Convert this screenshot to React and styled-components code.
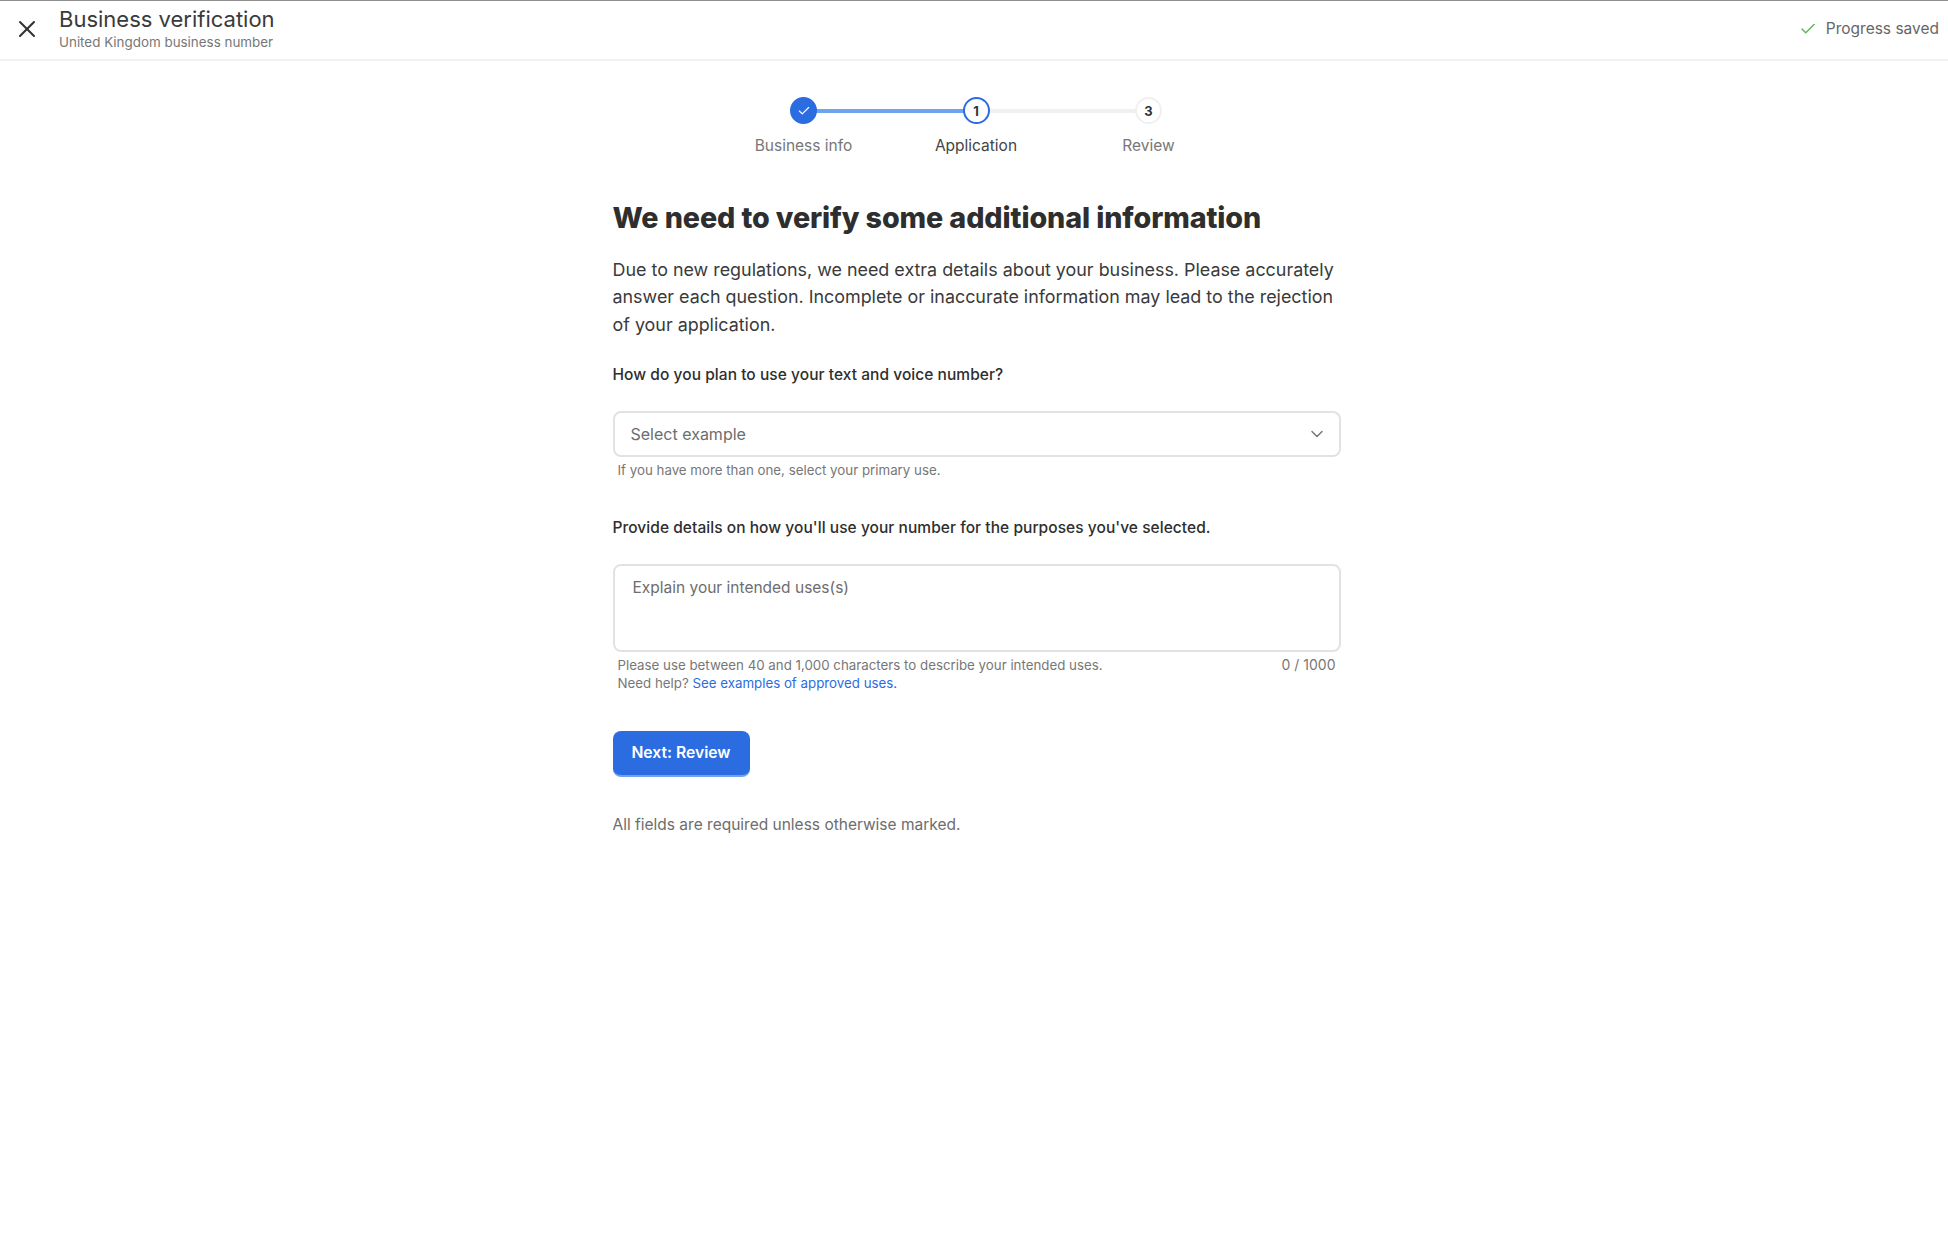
import React from "react";
import styled, { createGlobalStyle } from "styled-components";
import { X, Check, ChevronDown } from "lucide-react";

const GlobalStyle = createGlobalStyle`
  html, body {
    margin: 0;
    padding: 0;
    background: #fff;
    font-family: "Inter", "Liberation Sans", sans-serif;
    color: #2b2b2b;
  }
  * { box-sizing: border-box; }
`;

const Page = styled.div`
  min-height: 1256px;
  display: flex;
  flex-direction: column;
`;

const Header = styled.header`
  height: 61px;
  display: flex;
  align-items: center;
  justify-content: space-between;
  border-top: 1px solid #8e8e8e;
  border-bottom: 2px solid #f2f2f2;
  padding: 0 9px 0 11px;
`;

const HeaderLeft = styled.div`
  display: flex;
  align-items: center;
  gap: 16px;
`;

const CloseBtn = styled.button`
  width: 32px;
  height: 32px;
  padding: 0;
  border: 0;
  background: none;
  color: #333;
  display: flex;
  align-items: center;
  justify-content: center;
  margin-top: -3px;
`;

const TitleBox = styled.div`
  display: flex;
  flex-direction: column;
  gap: 1px;
  margin-top: -4px;
`;

const Title = styled.div`
  font-size: 22px;
  line-height: 27px;
  color: #3a3a3a;
`;

const SubTitle = styled.div`
  font-size: 13.4px;
  line-height: 16px;
  color: #777;
`;

const Saved = styled.div`
  display: flex;
  align-items: center;
  gap: 9px;
  font-size: 15.5px;
  color: #666;
  margin-top: -3px;
  svg { color: #5cb85c; }
`;

const Stepper = styled.div`
  display: flex;
  justify-content: center;
  padding-top: 36px;
  margin-left: 4px;
`;

const Step = styled.div`
  width: 172.5px;
  display: flex;
  flex-direction: column;
  align-items: center;
  position: relative;
`;

const Connector = styled.div`
  position: absolute;
  top: 12px;
  left: 50%;
  width: 100%;
  height: 4px;
  background: ${({ $done }) => ($done ? "#6fa3ee" : "#f0f0f0")};
`;

const Dot = styled.div`
  position: relative;
  z-index: 1;
  width: 27px;
  height: 27px;
  border-radius: 50%;
  display: flex;
  align-items: center;
  justify-content: center;
  font-size: 13px;
  font-weight: 700;
  color: #333;
  background: ${({ $state }) => ($state === "done" ? "#2b6de1" : "#fff")};
  border: 2px solid
    ${({ $state }) => ($state === "todo" ? "#f0f0f0" : "#2b6de1")};
`;

const StepLabel = styled.div`
  margin-top: 13px;
  font-size: 15.5px;
  line-height: 18px;
  color: ${({ $active }) => ($active ? "#444" : "#777")};
`;

const Main = styled.main`
  width: 728px;
  margin: 0 0 0 612.5px;
  padding-top: 44px;
`;

const Heading = styled.h1`
  margin: 0;
  font-size: 28.7px;
  line-height: 38px;
  font-weight: 800;
  color: #2e2e2e;
  letter-spacing: -0.1px;
`;

const Intro = styled.p`
  margin: 19px 0 0;
  font-size: 17.9px;
  line-height: 27.3px;
  color: #3a3a3a;
`;

const Question = styled.div`
  font-size: 15.5px;
  line-height: 20px;
  font-weight: 500;
  letter-spacing: 0.05px;
  color: #2e2e2e;
  margin-top: ${({ $top }) => $top}px;
`;

const SelectBox = styled.div`
  margin-top: 26px;
  height: 46px;
  border: 2px solid #e2e2e2;
  border-radius: 8px;
  display: flex;
  align-items: center;
  justify-content: space-between;
  padding: 0 12px 0 16px;
  font-size: 16px;
  color: #6d6d6d;
  svg { color: #777; }
`;

const Hint = styled.div`
  padding: 0 5px;
  margin-top: 4px;
  font-size: 13.3px;
  line-height: 18px;
  color: #777;
`;

const TextArea = styled.div`
  margin-top: 26px;
  height: 88px;
  border: 2px solid #e2e2e2;
  border-radius: 8px;
  padding: 12px 18px;
  font-size: 15.5px;
  line-height: 20px;
  color: #6d6d6d;
`;

const HelpRow = styled.div`
  display: flex;
  justify-content: space-between;
  padding: 0 5px;
  margin-top: 4px;
  font-size: 13.3px;
  line-height: 18px;
  color: #777;
`;

const Counter = styled.div`
  font-size: 14px;
`;

const HelpLink = styled.a`
  color: #2b6de1;
`;

const NextBtn = styled.button`
  display: block;
  margin-top: 39px;
  width: 137px;
  height: 46px;
  padding: 0;
  border: 0;
  border-bottom: 2px solid #6fa3ee;
  border-radius: 8px;
  background: #2b6de1;
  color: #fff;
  font-family: inherit;
  font-size: 15.7px;
  font-weight: 600;
`;

const Footnote = styled.p`
  margin: 38px 0 0;
  font-size: 15.5px;
  line-height: 20px;
  color: #6d6d6d;
`;

const steps = [
  { label: "Business info", state: "done" },
  { label: "Application", state: "active", num: 1 },
  { label: "Review", state: "todo", num: 3 },
];

export default function App() {
  return (
    <Page>
      <GlobalStyle />
      <Header>
        <HeaderLeft>
          <CloseBtn aria-label="Close">
            <X size={28} strokeWidth={1.75} />
          </CloseBtn>
          <TitleBox>
            <Title>Business verification</Title>
            <SubTitle>United Kingdom business number</SubTitle>
          </TitleBox>
        </HeaderLeft>
        <Saved>
          <Check size={18} strokeWidth={2} />
          Progress saved
        </Saved>
      </Header>

      <Stepper>
        {steps.map((s, i) => (
          <Step key={s.label}>
            {i < steps.length - 1 && <Connector $done={s.state === "done"} />}
            <Dot $state={s.state}>
              {s.state === "done" ? (
                <Check size={14} color="#fff" strokeWidth={2} />
              ) : (
                s.num
              )}
            </Dot>
            <StepLabel $active={s.state === "active"}>{s.label}</StepLabel>
          </Step>
        ))}
      </Stepper>

      <Main>
        <Heading>We need to verify some additional information</Heading>
        <Intro>
          Due to new regulations, we need extra details about your business. Please accurately
          answer each question. Incomplete or inaccurate information may lead to the rejection
          of your application.
        </Intro>

        <Question $top={27}>How do you plan to use your text and voice number?</Question>
        <SelectBox>
          Select example
          <ChevronDown size={20} strokeWidth={1.75} />
        </SelectBox>
        <Hint>If you have more than one, select your primary use.</Hint>

        <Question $top={39}>
          Provide details on how you'll use your number for the purposes you've selected.
        </Question>
        <TextArea>Explain your intended uses(s)</TextArea>
        <HelpRow>
          <div>
            Please use between 40 and 1,000 characters to describe your intended uses.
            <br />
            Need help? <HelpLink>See examples of approved uses.</HelpLink>
          </div>
          <Counter>0 / 1000</Counter>
        </HelpRow>

        <NextBtn>Next: Review</NextBtn>
        <Footnote>All fields are required unless otherwise marked.</Footnote>
      </Main>
    </Page>
  );
}
